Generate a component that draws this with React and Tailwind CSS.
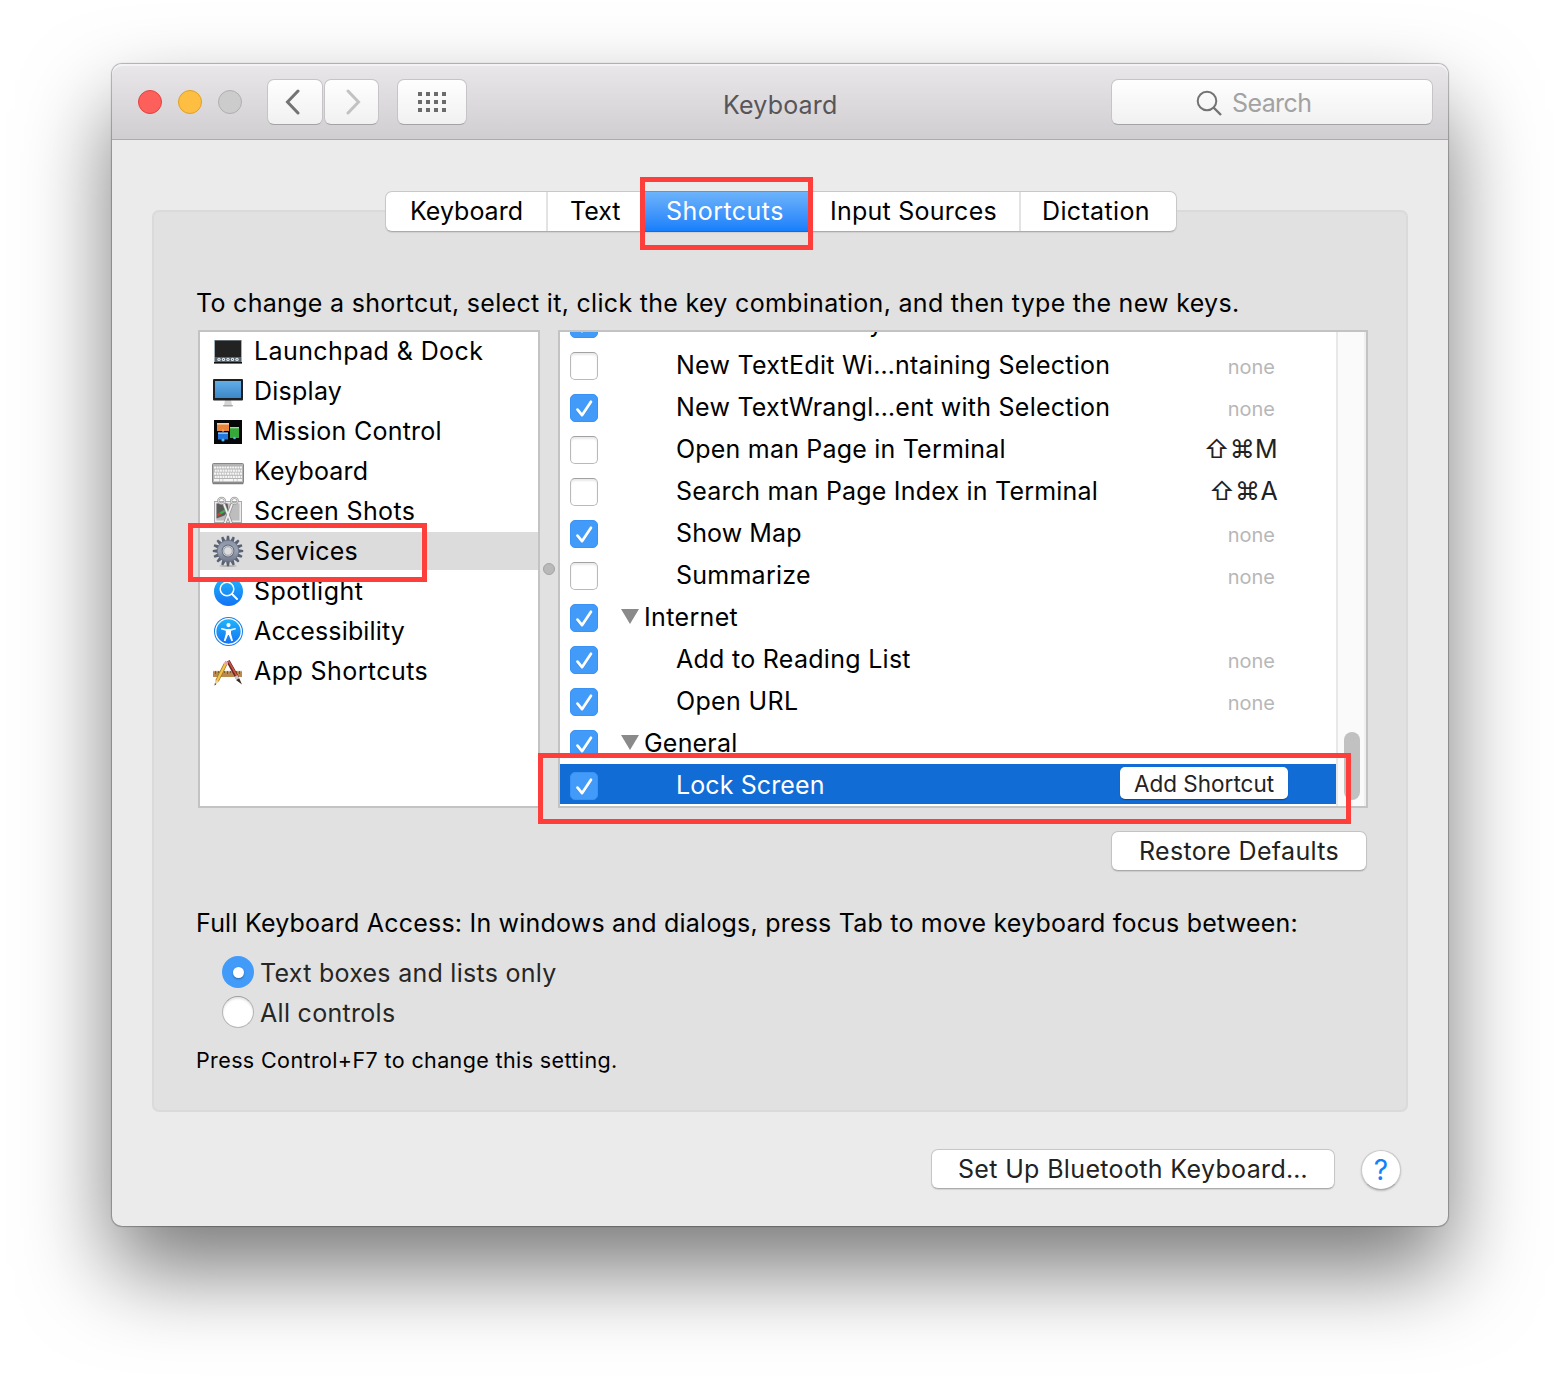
import React from 'react';

const categories = [
  { name: 'Launchpad & Dock', icon: <LaunchpadIcon />, text: 'tracking-[0.4px]' },
  { name: 'Display', icon: <DisplayIcon />, text: 'tracking-[0.25px]' },
  { name: 'Mission Control', icon: <MissionIcon />, text: 'tracking-[0.25px]' },
  { name: 'Keyboard', icon: <KeyboardIcon />, text: 'tracking-[0.15px]' },
  { name: 'Screen Shots', icon: <ScreenShotIcon />, text: 'tracking-[0.33px]' },
  { name: 'Services', icon: <GearIcon />, text: 'tracking-[0.15px]', active: true },
  { name: 'Spotlight', icon: <SpotlightIcon />, text: 'tracking-[0.5px]' },
  { name: 'Accessibility', icon: <AccessibilityIcon />, text: 'tracking-[0.15px]' },
  { name: 'App Shortcuts', icon: <AppShortcutsIcon />, text: 'tracking-[0.42px]' },
];

const shortcuts = [
  { name: 'Make New Sticky Note', checked: true, keys: '⇧⌘Y', text: 'tracking-[0.2px]' },
  { name: 'New TextEdit Wi…ntaining Selection', text: 'tracking-[0.26px]' },
  { name: 'New TextWrangl…ent with Selection', checked: true, text: 'tracking-[0.24px]' },
  { name: 'Open man Page in Terminal', keys: '⇧⌘M', text: 'tracking-[0.2px]' },
  { name: 'Search man Page Index in Terminal', keys: '⇧⌘A', text: 'tracking-[0.2px]' },
  { name: 'Show Map', checked: true, text: 'tracking-[0.1px]' },
  { name: 'Summarize', text: 'tracking-[0.25px]' },
  { name: 'Internet', checked: true, group: true, text: 'tracking-[0.35px]' },
  { name: 'Add to Reading List', checked: true, text: 'tracking-[0.28px]' },
  { name: 'Open URL', checked: true, text: 'tracking-[0.35px]' },
  { name: 'General', checked: true, group: true, text: 'tracking-[0.2px]' },
  { name: 'Lock Screen', checked: true, selected: true, text: 'tracking-[0.1px]' },
];

function LaunchpadIcon() {
  return (
    <svg width="32" height="32" viewBox="0 0 32 32">
      <rect x="2" y="5" width="28" height="23.5" fill="#9fb0ba" />
      <rect x="3" y="5.5" width="26" height="16.5" fill="#222" />
      <rect x="3" y="22" width="26" height="5.5" fill="#56616b" />
      <rect x="2" y="27" width="28" height="1.5" fill="#111" />
      {[7, 11.5, 16, 20.5, 25].map((x) => (
        <circle key={x} cx={x} cy="24.4" r="1.7" fill="#e3edf5" />
      ))}
      {[7, 11.5, 16, 20.5, 25].map((x) => (
        <circle key={x} cx={x} cy="24.4" r="0.6" fill="#59656f" />
      ))}
    </svg>
  );
}

function DisplayIcon() {
  return (
    <svg width="32" height="32" viewBox="0 0 32 32">
      <defs>
        <linearGradient id="screen" x1="0" y1="0" x2="0" y2="1">
          <stop offset="0" stopColor="#62aee8" />
          <stop offset="1" stopColor="#3c87c8" />
        </linearGradient>
      </defs>
      <path d="M13 25h6l1 5.5h-8z" fill="#d5d5d5" />
      <rect x="11" y="30" width="10" height="1.6" rx="0.8" fill="#a9a9a9" />
      <rect x="1" y="4" width="30" height="21.5" rx="1" fill="#1d2023" />
      <rect x="3" y="6" width="26" height="17" fill="url(#screen)" />
    </svg>
  );
}

function MissionIcon() {
  return (
    <svg width="32" height="32" viewBox="0 0 32 32">
      <rect x="2" y="5" width="28" height="24" fill="#060708" />
      <rect x="5" y="8" width="12" height="8" fill="#e8833a" />
      <rect x="5" y="8" width="12" height="1.6" fill="#f7cfa4" />
      <rect x="18" y="12" width="9" height="11" fill="#36a83a" />
      <rect x="18" y="12" width="9" height="1.3" fill="#a2dda0" />
      <rect x="6" y="17.5" width="10" height="7" fill="#2377dd" />
      <rect x="6" y="17.5" width="10" height="1.3" fill="#a6d0fb" />
      <circle cx="11" cy="25" r="1.6" fill="#54b4f5" />
      <circle cx="11" cy="15.5" r="1.2" fill="#fa9d54" />
      <circle cx="22.5" cy="23" r="1.3" fill="#4fb9e2" />
    </svg>
  );
}

function KeyboardIcon() {
  const rows = [12.5, 15.6, 18.7, 21.8];
  return (
    <svg width="32" height="32" viewBox="0 0 32 32">
      <rect x="0.5" y="8.5" width="31" height="19.5" rx="1" fill="#b4b4b4" stroke="#878787" />
      <rect x="0.5" y="27.6" width="31" height="1.6" rx="0.8" fill="#7f7f7f" />
      {rows.map((y, i) => (
        <path
          key={y}
          d={`M${2 + (i % 2) * 0.7} ${y}H30`}
          stroke="#f6f6f6"
          strokeWidth="2.2"
          strokeDasharray="2 0.6"
        />
      ))}
      <path d="M2 25.1h5M7.6 25.1h3M11.2 25.1h10M21.8 25.1h3M25.4 25.1h4.6" stroke="#f6f6f6" strokeWidth="2.4" />
    </svg>
  );
}

function ScreenShotIcon() {
  return (
    <svg width="32" height="32" viewBox="0 0 32 32">
      <rect x="2.5" y="6.5" width="27" height="21" fill="#ececec" stroke="#aaa" />
      <path d="M4.5 8.5h23v17h-23z" fill="#bdbdbd" />
      <path d="M4.5 8.5h11l1 7-4 5-8 3z" fill="#5a5a5a" />
      <path d="M8 18.5l5-3" stroke="#36b24a" strokeWidth="2.2" />
      <path d="M5.5 20.2l3-1.8" stroke="#e23c30" strokeWidth="2.2" />
      <path d="M11.5 8l8 21M20.5 8l-8 21" stroke="#8c8c8c" strokeWidth="3.2" />
      <path d="M11.5 8l8 21M20.5 8l-8 21" stroke="#f0f0f0" strokeWidth="1.8" />
      <ellipse cx="9.6" cy="5.8" rx="3.3" ry="2.9" fill="none" stroke="#999" strokeWidth="2.2" />
      <ellipse cx="22.4" cy="5.8" rx="3.3" ry="2.9" fill="none" stroke="#999" strokeWidth="2.2" />
      <ellipse cx="9.6" cy="5.8" rx="3.3" ry="2.9" fill="none" stroke="#e2e2e2" strokeWidth="1" />
      <ellipse cx="22.4" cy="5.8" rx="3.3" ry="2.9" fill="none" stroke="#e2e2e2" strokeWidth="1" />
    </svg>
  );
}

function GearIcon() {
  const teeth = Array.from({ length: 16 }, (_, i) => i * 22.5);
  return (
    <svg width="32" height="32" viewBox="0 0 32 32">
      <defs>
        <linearGradient id="gear" gradientUnits="userSpaceOnUse" x1="0" y1="4" x2="0" y2="28">
          <stop offset="0" stopColor="#8a93a5" />
          <stop offset="0.5" stopColor="#9ba3b3" />
          <stop offset="1" stopColor="#687082" />
        </linearGradient>
      </defs>
      <ellipse cx="16" cy="31" rx="9" ry="0.9" fill="#999" opacity="0.6" />
      {teeth.map((a) => (
        <path key={a} d="M14.1 6.5l0.8-5.7h2.2l0.8 5.7z" fill="#596273" transform={`rotate(${a} 16 16)`} />
      ))}
      <circle cx="16" cy="16" r="10.8" fill="url(#gear)" stroke="#667082" strokeWidth="0.7" />
      <circle cx="16" cy="16" r="6.4" fill="#636c7d" />
      <circle cx="16" cy="16" r="5.4" fill="#d9dce2" />
      <circle cx="16" cy="16" r="4.3" fill="#dcdcdc" stroke="#7d8593" strokeWidth="0.7" />
    </svg>
  );
}

function SpotlightIcon() {
  return (
    <svg width="32" height="32" viewBox="0 0 32 32">
      <defs>
        <linearGradient id="spot" x1="0" y1="0" x2="0" y2="1">
          <stop offset="0" stopColor="#1fb5fb" />
          <stop offset="1" stopColor="#1472f5" />
        </linearGradient>
      </defs>
      <circle cx="16.5" cy="16.5" r="14.5" fill="url(#spot)" />
      <circle cx="15" cy="14" r="6.8" fill="none" stroke="#fff" strokeWidth="1.5" />
      <path d="M20 19l5 5" stroke="#fff" strokeWidth="2" strokeLinecap="round" />
    </svg>
  );
}

function AccessibilityIcon() {
  return (
    <svg width="32" height="32" viewBox="0 0 32 32">
      <circle cx="16.5" cy="16.5" r="14.5" fill="#1a80e2" />
      <circle cx="16.5" cy="16.5" r="12.8" fill="url(#spot)" stroke="#fff" strokeWidth="1.3" />
      <circle cx="16.5" cy="10.1" r="2.1" fill="#fff" />
      <path
        d="M9.4 12.9l5 1.1h4.2l5-1.1.3 1.4-4.9 1.5v3l2 7-1.6.5-2.6-6.2h-.8l-2.6 6.2-1.6-.5 2-7v-3l-4.9-1.5z"
        fill="#fff"
      />
    </svg>
  );
}

function AppShortcutsIcon() {
  return (
    <svg width="32" height="32" viewBox="0 0 32 32">
      <rect x="1" y="16" width="29" height="6" fill="#b88a50" />
      <path d="M1 16.3h29" stroke="#d8b37c" strokeWidth="0.8" />
      <path d="M3.5 16v3M6.5 16v2M9.5 16v3M12.5 16v2M15.5 16v3M18.5 16v2M21.5 16v3M24.5 16v2M27.5 16v3" stroke="#6d4c22" strokeWidth="0.8" />
      <path d="M16 6l9.5 17" stroke="#6b2421" strokeWidth="3.6" />
      <path d="M16.4 5.8L25.5 22" stroke="#cb5546" strokeWidth="1.6" />
      <path d="M24 21l1.6 3" stroke="#c9c9c9" strokeWidth="3.6" />
      <path d="M24 25l3.2-1.8L30 29.6z" fill="#3a2a22" />
      <path d="M13.5 9L5 26" stroke="#a67418" strokeWidth="3.8" />
      <path d="M13.5 9L5 26" stroke="#f3c54b" strokeWidth="2.2" />
      <path d="M12 8.2l3.4 1.8 1-2.4-3.2-1.8z" fill="#e79bb0" />
      <path d="M3.3 25l3.5 1.8-4.2 3.4z" fill="#e9cfa3" />
      <path d="M2.9 28.2l1.4.7-1.7 1.5z" fill="#222" />
    </svg>
  );
}

function Checkbox({ checked }) {
  if (!checked) {
    return (
      <span className="block size-7 shrink-0 rounded-[5px] border border-[#b9b9b9] border-t-[#a2a2a2] bg-white shadow-[inset_0_2px_2px_rgba(0,0,0,0.09)]" />
    );
  }
  return (
    <span className="block size-7 shrink-0 rounded-[5px] border border-[#3a92f5] bg-[#429bf9]">
      <svg width="26" height="26" viewBox="0 0 26 26" fill="none" strokeLinecap="round" strokeLinejoin="round">
        <path d="M6.5 15.5l4.5 5.3 9-13.6" stroke="#2b7cd6" strokeWidth="2.8" opacity="0.5" />
        <path d="M6.5 14.7l4.5 5.5 9-13.4" stroke="#fff" strokeWidth="2.8" />
      </svg>
    </span>
  );
}

function ShortcutRow({ name, checked, keys, group, selected, text }) {
  return (
    <div className={`flex h-10 mb-0.5 pl-2.5 shrink-0 ${selected ? 'bg-[#116cd6] text-white' : 'bg-white'}`}>
      <div className="pt-2">
        <Checkbox checked={checked} />
      </div>
      {group ? (
        <div className="flex pl-[23px]">
          <svg className="mt-[13px]" width="18" height="15" viewBox="0 0 18 15">
            <path d="M0 0h18L9 15z" fill="#8a8a8a" />
          </svg>
          <span className={`pl-[5px] leading-[42px] ${text}`}>{name}</span>
        </div>
      ) : (
        <span className={`pl-[78px] leading-[42px] whitespace-nowrap ${text}`}>{name}</span>
      )}
      {!group && !selected && (
        <div className="ml-auto pr-[58px]">
          {keys ? (
            <span className="text-[#222] leading-[42px] tracking-[0.3px]">{keys}</span>
          ) : (
            <span className="block pr-[3px] text-[20px] leading-[47px] text-[#b7b7b7]">none</span>
          )}
        </div>
      )}
      {selected && (
        <button className="ml-auto mr-12 mt-[3px] h-8 w-[168px] rounded-[5px] bg-white text-[22.5px] leading-[34px] text-[#222] shadow-[0_1px_1px_rgba(0,0,0,0.35)]">
          Add Shortcut
        </button>
      )}
    </div>
  );
}

function Toolbar() {
  const button =
    'flex items-center justify-center h-[46px] rounded-[7px] border border-[#c6c4c7] border-b-[#a5a3a6] bg-linear-to-b from-[#fefefe] to-[#f1f1f1]';
  return (
    <header className="flex h-[76px] items-start rounded-t-[10px] border-b border-[#aeabaf] bg-linear-to-b from-[#e9e7ea] to-[#d1ced2] pt-[15px] shadow-[inset_0_2px_0_#f3f2f4]">
      <div className="flex gap-4 pl-[26px] pt-[11px]">
        <span className="size-6 rounded-full border border-[#e0433f] bg-[#fd5f5b]" />
        <span className="size-6 rounded-full border border-[#dfa023] bg-[#fdbe41]" />
        <span className="size-6 rounded-full border border-[#b0aeb1] bg-[#cdcccd]" />
      </div>
      <div className="flex gap-px pl-[25px]">
        <button className={`${button} w-14`}>
          <svg width="16" height="26" viewBox="0 0 16 26" fill="none" className="-ml-1">
            <path d="M13 2L2.5 13 13 24" stroke="#737373" strokeWidth="3" strokeLinecap="round" />
          </svg>
        </button>
        <button className={`${button} w-[55px]`}>
          <svg width="16" height="26" viewBox="0 0 16 26" fill="none" className="ml-1">
            <path d="M2 2l10.5 11L2 24" stroke="#c2c2c2" strokeWidth="3" strokeLinecap="round" />
          </svg>
        </button>
      </div>
      <button className={`${button} ml-[18px] w-[70px]`}>
        <svg width="28" height="20" viewBox="0 0 28 20" fill="#6b6b6b">
          {[0, 8, 16].map((y) => [0, 8, 16, 24].map((x) => <rect key={`${x}-${y}`} x={x} y={y} width="4" height="4" />))}
        </svg>
      </button>
      <h1 className="ml-[256px] leading-[52px] tracking-[0.2px] text-[#575558]">Keyboard</h1>
      <div className="ml-auto mr-[15px] flex h-[46px] w-[322px] items-center rounded-[7px] border border-[#c6c4c7] border-b-[#a5a3a6] bg-linear-to-b from-[#fefefe] to-[#f1f1f1] pl-[84px]">
        <svg className="mt-0.5" width="28" height="28" viewBox="0 0 28 28" fill="none" stroke="#737373" strokeWidth="2">
          <circle cx="11" cy="12" r="9.3" />
          <path d="M17.5 18.5l7.5 7.5" strokeWidth="2.4" />
        </svg>
        <span className="pl-2 pt-[3px] tracking-[-0.6px] text-[#a2a2a2]">Search</span>
      </div>
    </header>
  );
}

function Tabs() {
  return (
    <nav className="-mt-[21px] ml-[189px] flex h-[41px] w-[792px] rounded-[7px] border border-[#c8c8c8] border-b-[#ababab] bg-white leading-[39px] shadow-[0_1px_1px_rgba(0,0,0,0.08)]">
      <span className="w-[162px] border-r-2 border-[#e3e3e3] pl-6">Keyboard</span>
      <span className="w-[97px] pl-[22px]">Text</span>
      <span className="-my-px h-[41px] w-[164px] border-y border-t-[#4d97ee] border-b-[#1768e0] bg-linear-to-b from-[#6cb3fa] to-[#157efb] pl-[21px] tracking-[0.45px] text-white">
        Shortcuts
      </span>
      <span className="w-[212px] border-r-2 border-[#e3e3e3] pl-[21px] tracking-[0.25px]">Input Sources</span>
      <span className="pl-[21px] tracking-[0.35px]">Dictation</span>
    </nav>
  );
}

export default function App() {
  return (
    <div className="relative h-[1386px] w-[1560px] overflow-hidden bg-white px-28 pt-16 font-['Inter',sans-serif] text-[25px] text-black">
      <div className="flex h-[1162px] w-[1336px] flex-col rounded-[10px] bg-[#ebebeb] shadow-[0_0_1px_1px_rgba(0,0,0,0.28),0_44px_88px_rgba(0,0,0,0.53)]">
        <Toolbar />

        <main className="mx-10 mt-[70px] h-[902px] rounded-[7px] border-2 border-[#dadada] bg-[#e1e1e1] pl-[42px] pr-9">
          <Tabs />
          <p className="mt-[52px] h-[46px] leading-[38px] whitespace-nowrap tracking-[0.3px]">
            To change a shortcut, select it, click the key combination, and then type the new keys.
          </p>

          <div className="ml-0.5 flex h-[478px]">
            <div className="w-[342px] shrink-0 border-2 border-[#c3c3c3] bg-white">
              {categories.map((c) => (
                <div key={c.name} className={`mb-0.5 flex h-[38px] pl-3 leading-[38px] ${c.active ? 'bg-[#dcdcdc]' : ''}`}>
                  <span className="pt-[3px]">{c.icon}</span>
                  <span className={`pl-2.5 ${c.text}`}>{c.name}</span>
                </div>
              ))}
            </div>
            <div className="flex w-[18px] shrink-0 items-center justify-center">
              <span className="size-3 rounded-full border border-[#a3a3a3] bg-[#b9b9b9]" />
            </div>
            <div className="flex w-[810px] shrink-0 overflow-hidden border-2 border-[#c3c3c3] bg-white">
              <div className="-mt-[30px] flex w-[776px] flex-col">
                {shortcuts.map((s) => (
                  <ShortcutRow key={s.name} {...s} />
                ))}
              </div>
              <div className="flex w-[30px] items-end border-l-2 border-r-2 border-l-[#e8e8e8] border-r-[#efefef] bg-[#fafafa] pb-1.5 pl-1.5">
                <div className="h-[68px] w-4 rounded-full bg-[#c1c1c1]" />
              </div>
            </div>
          </div>

          <button className="ml-[915px] mt-[23px] block h-10 w-[256px] rounded-[7px] border border-[#c3c3c3] border-b-[#a9a9a9] bg-white leading-[38px] tracking-[0.33px] text-[#222] shadow-[0_1px_1px_rgba(0,0,0,0.1)]">
            Restore Defaults
          </button>

          <p className="mt-8 leading-[40px] whitespace-nowrap tracking-[0.21px]">
            Full Keyboard Access: In windows and dialogs, press Tab to move keyboard focus between:
          </p>
          <div className="mt-[9px] flex h-10 items-center pl-[26px] text-[#262626]">
            <span className="flex size-8 items-center justify-center rounded-full bg-[#429bf9]">
              <span className="size-[11px] rounded-full bg-white shadow-[0_1px_2px_rgba(0,0,0,0.35)]" />
            </span>
            <span className="pl-1.5 pt-[3px] tracking-[0.27px]">Text boxes and lists only</span>
          </div>
          <div className="flex h-10 items-center pl-[26px] text-[#262626]">
            <span className="size-8 rounded-full border border-[#b5b5b5] border-t-[#9c9c9c] bg-white shadow-[inset_0_2px_2px_rgba(0,0,0,0.1)]" />
            <span className="pl-1.5 pt-[3px] tracking-[0.3px]">All controls</span>
          </div>
          <p className="mt-[9px] text-[21.5px] leading-[39px] tracking-[0.38px]">Press Control+F7 to change this setting.</p>
        </main>

        <footer className="flex justify-end gap-[26px] pr-[47px] pt-[37px]">
          <button className="h-10 w-[404px] rounded-[7px] border border-[#c6c6c6] border-b-[#ababab] bg-white leading-[38px] tracking-[0.35px] text-[#222] shadow-[0_1px_1px_rgba(0,0,0,0.1)]">
            Set Up Bluetooth Keyboard…
          </button>
          <button className="mt-px size-10 rounded-full border border-[#c9c9c9] border-b-[#ababab] bg-white text-[28px] leading-[38px] text-[#157efb] shadow-[0_1px_2px_rgba(0,0,0,0.2)]">
            ?
          </button>
        </footer>
      </div>

      <div className="absolute left-[640px] top-[177px] h-[73px] w-[173px] border-5 border-[#fe3e3a]" />
      <div className="absolute left-[188px] top-[523px] h-[59px] w-[239px] border-5 border-[#fe3e3a]" />
      <div className="absolute left-[538px] top-[753px] h-[71px] w-[813px] border-5 border-[#fe3e3a]" />
    </div>
  );
}
